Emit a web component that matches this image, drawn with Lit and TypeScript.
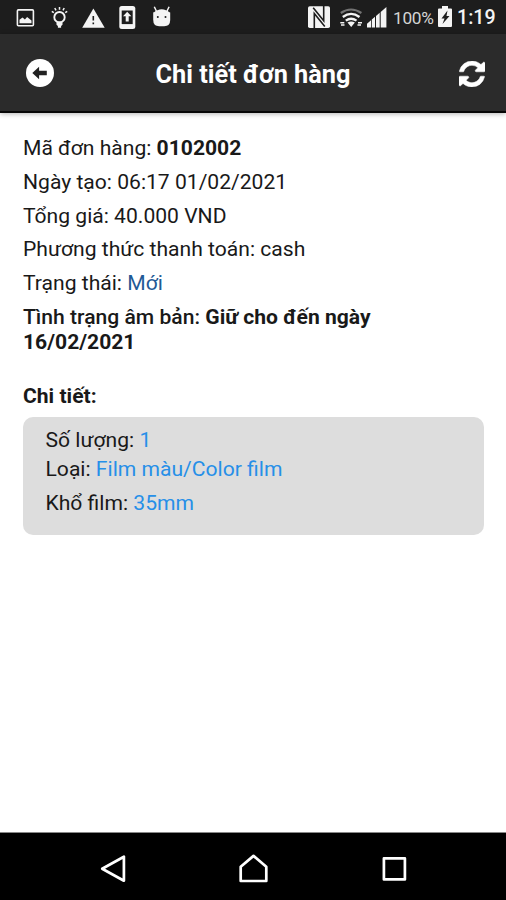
import { LitElement, html, css } from "lit";
import { customElement } from "lit/decorators.js";

@customElement("status-bar")
class StatusBar extends LitElement {
  static styles = css`
    :host { display: flex; height: 34px; background: #1d1d1d; color: #f4f4f4; fill: #f4f4f4;
      align-items: center; justify-content: space-between; }
    svg { display: block; height: 34px; }
    .group { display: flex; align-items: center; }
    .left { padding-left: 14px; gap: 10px; }
    .right { padding-right: 12px; }
    .line { fill: none; stroke: #f4f4f4; }
    .gap { fill: none; stroke: #1d1d1d; }
    .cut { fill: #1d1d1d; }
    .pct { font-size: 17.3px; line-height: 34px; margin: 2px 2px 0 5px; width: 42px; white-space: nowrap; color: #d4d4d4; letter-spacing: -0.3px; }
    .time { font-size: 19.6px; line-height: 34px; margin: 2px 0 0 5px; width: 37px; white-space: nowrap; font-weight: 500; }
  `;
  render() {
    return html`
      <div class="group left">
        <svg width="24" viewBox="14 0 24 34">
          <rect class="line" x="17.4" y="9.9" width="16" height="15.8" rx="1" stroke-width="1.6"/>
          <path d="M19.5 23.2v-3.4l3-2.4 2.4 2 2.2-2.4 4.4 3.4v2.8z"/>
        </svg>
        <svg width="24" viewBox="48 0 24 34">
          <circle class="line" cx="59.5" cy="17.2" r="5.2" stroke-width="1.9"/>
          <path d="M56.5 21.5h6v3.2l-1.4 1.2v1.8h-3.2v-1.8l-1.4-1.2z"/>
          <path class="line" stroke-width="1.5" d="M59.5 7v2.7M54.8 8l1.2 2.3M64.2 8L63 10.3M51.8 11.3l2 1.4M67.2 11.3l-2 1.4"/>
        </svg>
        <svg width="24" viewBox="82 0 24 34">
          <path d="M93.400 8.500L104.700 27.800H82.200z"/>
          <path class="cut" d="M92.500 16h1.600v4.500h-1.600zM92.500 22.400h1.600v1.800h-1.600z"/>
        </svg>
        <svg width="24" viewBox="116 0 24 34">
          <rect x="119.300" y="6" width="16" height="23" rx="2.500"/>
          <path class="cut" d="M121.700 10.500h11v13.600h-11z"/>
          <path d="M127.200 11.800l4.200 4.500h-2.700v5.200h-3v-5.200H123z"/>
        </svg>
        <svg width="24" viewBox="149 0 24 34">
          <path d="M152.200 12.500h17v7.200q0 6.500-6 6.500h-5q-6 0-6-6.500z"/>
          <path class="line" stroke-width="1.500" d="M153.300 6.800l2.400 5M168.100 6.800l-2.400 5"/>
          <path d="M152.200 13q8.500-7.500 17 0z"/>
          <circle class="cut" cx="156.800" cy="17" r="1"/><circle class="cut" cx="164.500" cy="17" r="1"/>
        </svg>
      </div>
      <div class="group right">
        <svg width="82" viewBox="306 0 82 34">
          <rect x="308" y="6.200" width="22" height="21.800" rx="1.800"/>
          <path class="gap" stroke-width="1.600" d="M314.300 28.500V13.500L324.800 26.500M323.700 5.700V20.700L313.200 7.700"/>
          <path class="line" stroke-width="2.200" d="M340.800 13q10.200-7 20.600 0" opacity=".4"/>
          <path class="line" stroke-width="2.300" d="M342.800 17q8.300-6.300 16.700 0M345.800 20.700q5.300-4 10.700 0"/>
          <path d="M347.500 22.600q3.700-2.200 7.400 0l-3.700 4.500zM340.300 21.900h4v1.600h-4zM341 24.200h3.500v1.600H341zM358 21.900h4v1.600h-4zM357.500 24.200h3.500v1.600h-3.500z"/>
          <path d="M367 27.500v-3.800l4-3.400v7.200zM371.800 27.500v-8l3.200-2.700v10.700zM376 27.500V16l3.700-3.200v14.700zM380.700 27.500V12l5.700-5v20.500z"/>
        </svg>
        <span class="pct">100%</span>
        <svg width="15" viewBox="436 0 15 34">
          <path d="M437 9.500q0-1 1-1h3V6h6v2.500h3q1 0 1 1V26q0 1-1 1h-12q-1 0-1-1z"/>
          <path class="cut" d="M446.500 10.500l-6 8h3l-2 5.500 7-8h-3z"/>
        </svg>
        <span class="time">1:19</span>
      </div>`;
  }
}

@customElement("title-bar")
class TitleBar extends LitElement {
  static styles = css`
    :host { display: grid; grid-template-columns: 50px 1fr 50px; box-sizing: border-box; height: 79px; background: #2b2b2b; border-bottom: 2px solid #060606;
      box-shadow: 0 1px 5px rgba(0,0,0,.3); color: #fff; align-items: center; padding: 0 21px 0 25px; position: relative; }
    svg { display: block; }
    .refresh { justify-self: end; margin-top: 2px; }
    h1 { margin: 5px 0 0; padding-right: 4px; text-align: center; font-size: 25.3px; line-height: 30px; font-weight: 700; white-space: nowrap; }
  `;
  render() {
    return html`
      <svg width="30" height="30" viewBox="0 0 30 30">
        <circle cx="15" cy="15" r="14" fill="#fff"/>
        <path d="M7.300 15l6.800-6.300v4.100h7.700v4.400h-7.700v4.100z" fill="#222"/>
      </svg>
      <h1>Chi tiết đơn hàng</h1>
      <svg class="refresh" width="26" height="26" viewBox="0 0 1536 1536" fill="#fff" stroke="#fff" stroke-width="30">
        <path d="M1511 928q0 5-1 7-64 268-268 434.500T764 1536q-146 0-282.500-55T238 1324l-129 129q-19 19-45 19t-45-19-19-45V960q0-26 19-45t45-19h448q26 0 45 19t19 45-19 45l-137 137q71 66 161 102t187 36q134 0 250-65t186-179q11-17 53-117 8-23 30-23h192q13 0 22.500 9.500t9.500 22.500zM1536 128v448q0 26-19 45t-45 19h-448q-26 0-45-19t-19-45 19-45l138-138Q969 256 768 256q-134 0-250 65T332 500q-11 17-53 117-8 23-30 23H50q-13 0-22.500-9.500T18 608v-7q65-268 270-434.500T768 0q146 0 284 55.500T1297 212l130-129q19-19 45-19t45 19 19 45z"/>
      </svg>`;
  }
}

@customElement("nav-bar")
class NavBar extends LitElement {
  static styles = css`
    :host { display: flex; box-sizing: border-box; height: 68px; background: #000; border-top: 1px solid #888;
      justify-content: space-between; align-items: center; padding: 4px 96px 0 97px; }
    svg { display: block; fill: none; stroke: #fff; stroke-width: 2.700; stroke-linejoin: round; }
  `;
  render() {
    return html`
      <svg width="32" height="32" viewBox="0 0 32 32"><path d="M5.200 15.700L26.900 3.700v24z"/></svg>
      <svg width="32" height="32" viewBox="0 0 32 32"><path d="M2.700 13.700L15.500 2.900 28.300 13.700V28H2.700z"/></svg>
      <svg width="32" height="32" viewBox="0 0 32 32"><path d="M5.900 5.400h21v21h-21z"/></svg>`;
  }
}

@customElement("app-root")
class AppRoot extends LitElement {
  static styles = css`
    :host { display: flex; flex-direction: column; height: 900px; background: #fff; overflow: hidden;
      font-family: Roboto, "Noto Sans", sans-serif; color: #191919; }
    main { flex: 1; padding: 22px 22px 0 23px; font-size: 21.100px; line-height: 25.300px; }
    p { margin: 0 0 8.500px; }
    b, h2 { font-weight: 700; }
    .status { color: #1f5a96; }
    .medium { font-weight: 500; }
    h2 { margin: 28.500px 0 8.600px; font-size: inherit; }
    .card { box-sizing: border-box; height: 118px; background: #ddd; border-radius: 10px; padding: 10.300px 22.500px; }
    .card .tight { margin-bottom: 3px; }
    .card p + p { margin-bottom: 8.800px; }
    .value { color: #268fe8; }
  `;
  render() {
    return html`
      <status-bar></status-bar>
      <title-bar></title-bar>
      <main>
        <p>Mã đơn hàng: <b>0102002</b></p>
        <p>Ngày tạo: 06:17 01/02/2021</p>
        <p>Tổng giá: 40.000 VND</p>
        <p>Phương thức thanh toán: cash</p>
        <p>Trạng thái: <span class="status">Mới</span></p>
        <p><span class="medium">Tình trạng âm bản:</span> <b>Giữ cho đến ngày</b><br><b>16/02/2021</b></p>
        <h2>Chi tiết:</h2>
        <section class="card">
          <p class="tight">Số lượng: <span class="value">1</span></p>
          <p>Loại: <span class="value">Film màu/Color film</span></p>
          <p>Khổ film: <span class="value">35mm</span></p>
        </section>
      </main>
      <nav-bar></nav-bar>`;
  }
}
